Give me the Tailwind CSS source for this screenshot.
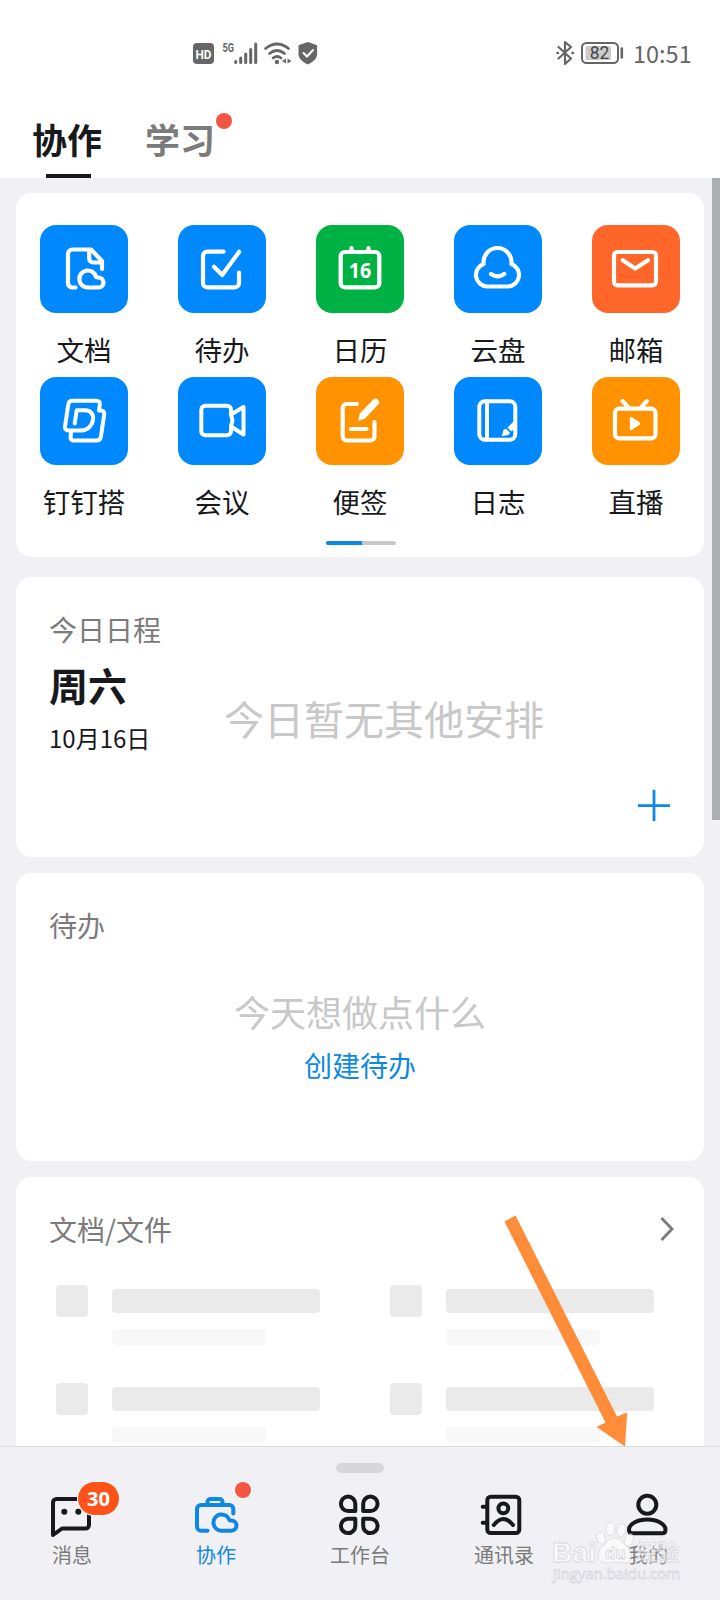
<!DOCTYPE html>
<html lang="zh-CN">
<head>
<meta charset="utf-8">
<title>协作</title>
<script src="https://cdn.jsdelivr.net/npm/@tailwindcss/browser@4"></script>
</head>
<body class="bg-[#f1f0f5]">
<div class="relative flex h-[1600px] w-[720px] flex-col overflow-hidden bg-[#f1f0f5] font-['Noto_Sans_CJK_SC',sans-serif] text-[#17191c]">

  <!-- Header -->
  <header class="flex h-[178px] shrink-0 flex-col bg-white">
    <div class="flex h-[106px] items-center justify-between pl-[190px] pr-7">
      <svg class="h-8 w-[132px]" viewBox="190 37 132 32" fill="none" stroke="#666" stroke-linecap="round">
        <rect x="193" y="43" width="21" height="21" rx="4" fill="#666" stroke="none"/>
        <text x="203.500" y="58.500" text-anchor="middle" font-family="Roboto" font-weight="700" font-size="13" textLength="16" lengthAdjust="spacingAndGlyphs" fill="#fff" stroke="none">HD</text>
        <text x="222.500" y="52" font-family="Roboto" font-weight="700" font-size="13" textLength="11.500" lengthAdjust="spacingAndGlyphs" fill="#666" stroke="none">5G</text>
        <path d="M235.700 61.500v1M240.700 58v4.500M245.700 54v8.500M250.700 49.500v13M255.700 44v18.500" stroke-width="3"/>
        <path d="M265.500 48.500q11.500-9 23 0M269.500 53.500q7.500-6 15 0M273 58q4-3 8 0" stroke-width="2.700"/>
        <circle cx="277" cy="62" r="2.200" fill="#666" stroke="none"/>
        <path d="M286 58.500v5l-4-2.500zM287.500 58.500v5l4-2.500z" fill="#666" stroke="none"/>
        <path d="M307.800 42l9.300 3.300v8.700c0 4.500-4 8-9.300 10.500-5.300-2.500-9.300-6-9.300-10.500v-8.700z" fill="#666" stroke="none"/>
        <path d="M303.500 53l3.500 3.500 6-6.500" stroke="#fff" stroke-width="2"/>
      </svg>
      <div class="flex items-center">
        <svg class="h-8 w-[73px]" viewBox="554 37 73 32" fill="none" stroke="#666" stroke-linecap="round" stroke-linejoin="round">
          <path d="M558.500 47l12.500 11.500-6 5.500V42l6 5-12.500 11.500" stroke-width="2.200"/>
          <path d="M557.500 53h.5M572.500 53h.5" stroke-width="2.500"/>
          <rect x="582" y="43" width="36" height="20" rx="4.500" stroke-width="2"/>
          <rect x="585.500" y="46" width="25.500" height="14" rx="1.500" fill="#ccc" stroke="none"/>
          <path d="M621.800 48.500v9" stroke-width="2.600"/>
          <text x="599.500" y="59" text-anchor="middle" font-family="Roboto" font-size="17.500" fill="#444" stroke="none">82</text>
        </svg>
        <span class="w-[65px] whitespace-nowrap pl-[6px] text-[23.500px] leading-8 text-[#666]">10:51</span>
      </div>
    </div>
    <nav class="flex h-[72px] pl-8">
      <div class="flex h-full w-[70px] flex-col items-center justify-between">
        <span class="text-[35px] font-bold leading-[66px]">协作</span>
        <span class="ml-[2px] h-1 w-[45px] shrink-0 bg-[#17191c]"></span>
      </div>
      <div class="relative ml-[43px] w-[72px]">
        <span class="text-[35px] font-bold leading-[66px] text-[#7b7b7b]">学习</span>
        <span class="absolute left-[71px] top-[7px] h-4 w-4 rounded-full bg-[#f25643]"></span>
      </div>
    </nav>
  </header>

  <main class="flex h-[1268px] shrink-0 flex-col overflow-hidden px-4 pt-[15px]">
    <!-- App grid -->
    <section class="flex h-[364px] w-[688px] shrink-0 flex-col items-center rounded-2xl bg-white pt-8">
      <div class="grid w-[690px] grid-cols-[repeat(5,138px)] justify-center text-center text-[27.500px] leading-[40px]">
        <div class="flex h-[152px] flex-col items-center">
          <svg class="h-[88px] w-[88px] shrink-0 rounded-[16px] bg-[#0089ff]" viewBox="0 0 88 88" fill="none" stroke="#fff" stroke-width="4.200" stroke-linecap="round" stroke-linejoin="round"><path d="M35.500 62.500h-3a4.500 4.500 0 0 1-4.500-4.500v-29a4.500 4.500 0 0 1 4.500-4.500H51L62 36v8M49.200 25v8.500a4 4 0 0 0 4 4H61"/><path d="M48 62.500a8.500 8.500 0 1 1 8-10.600l2.200.6a5 5 0 1 1 .6 10z"/></svg>
          <span class="mt-4">文档</span>
        </div>
        <div class="flex h-[152px] flex-col items-center">
          <svg class="h-[88px] w-[88px] shrink-0 rounded-[16px] bg-[#0089ff]" viewBox="0 0 88 88" fill="none" stroke="#fff" stroke-width="4.200" stroke-linecap="round" stroke-linejoin="round"><path d="M45.500 26.700H29a4 4 0 0 0-4 4v27.600a4 4 0 0 0 4 4h28a4 4 0 0 0 4-4V47.500M36 41.700l8.200 8.300 17-23.300"/></svg>
          <span class="mt-4">待办</span>
        </div>
        <div class="flex h-[152px] flex-col items-center">
          <svg class="h-[88px] w-[88px] shrink-0 rounded-[16px] bg-[#00b243]" viewBox="0 0 88 88" fill="none" stroke="#fff" stroke-width="4.200" stroke-linecap="round" stroke-linejoin="round"><rect x="24.700" y="27" width="38.600" height="35.300" rx="4"/><path d="M35.500 23v4M52.500 23v4"/><text x="44" y="52.800" text-anchor="middle" font-family="Open Sans" font-weight="700" font-size="22" textLength="22.500" lengthAdjust="spacingAndGlyphs" fill="#fff" stroke="none">16</text></svg>
          <span class="mt-4">日历</span>
        </div>
        <div class="flex h-[152px] flex-col items-center">
          <svg class="h-[88px] w-[88px] shrink-0 rounded-[16px] bg-[#0089ff]" viewBox="0 0 88 88" fill="none" stroke="#fff" stroke-width="4.200" stroke-linecap="round" stroke-linejoin="round"><path d="M29.600 39a14 14.300 0 1 1 27.800 0A11.600 11.600 0 0 1 53.800 61.500H33.200A11.600 11.600 0 0 1 29.600 39zM37 49q6.600 4.600 13.200 0"/></svg>
          <span class="mt-4">云盘</span>
        </div>
        <div class="flex h-[152px] flex-col items-center">
          <svg class="h-[88px] w-[88px] shrink-0 rounded-[16px] bg-[#ff6629]" viewBox="0 0 88 88" fill="none" stroke="#fff" stroke-width="4.200" stroke-linecap="round" stroke-linejoin="round"><rect x="22" y="27" width="42" height="33.300" rx="3.500"/><path d="M30.700 35.200L43.200 43.500l12.800-8.300"/></svg>
          <span class="mt-4">邮箱</span>
        </div>
        <div class="flex h-[152px] flex-col items-center">
          <svg class="h-[88px] w-[88px] shrink-0 rounded-[16px] bg-[#0089ff]" viewBox="0 0 88 88" fill="none" stroke="#fff" stroke-width="4" stroke-linecap="round" stroke-linejoin="round"><path d="M34.700 46.500l2-13.200H45c6 0 8.800 4 8 9.500-1 6.500-6 10.700-13 10.700H28.500c-2.500 0-3.800-1.600-3.500-4l3.300-22c.3-2.400 1.800-3.800 4-3.800h24c2.600 0 3.800 1.400 3.500 3.800l-.8 6h1.500c3 0 4 1.400 3.700 3.800l-3.300 22.500c-.4 2.600-2 3.800-4.200 3.800H34c-2.600 0-3.700-1.600-3.400-4l.4-3"/></svg>
          <span class="mt-4">钉钉搭</span>
        </div>
        <div class="flex h-[152px] flex-col items-center">
          <svg class="h-[88px] w-[88px] shrink-0 rounded-[16px] bg-[#0089ff]" viewBox="0 0 88 88" fill="none" stroke="#fff" stroke-width="4" stroke-linecap="round" stroke-linejoin="round"><path d="M53 37.500v-4.800a4 4 0 0 0-4-4H27.300a4 4 0 0 0-4 4v21.600a4 4 0 0 0 4 4H49a4 4 0 0 0 4-4v-4.800"/><path d="M53 37.500L65.500 30v27.500L53 49.500M53 37.500l1.500 6-1.500 6"/></svg>
          <span class="mt-4">会议</span>
        </div>
        <div class="flex h-[152px] flex-col items-center">
          <svg class="h-[88px] w-[88px] shrink-0 rounded-[16px] bg-[#ff9200]" viewBox="0 0 88 88" fill="none" stroke="#fff" stroke-width="4.200" stroke-linecap="round" stroke-linejoin="round"><path d="M41 27H30.700a4 4 0 0 0-4 4v28.500a4 4 0 0 0 4 4H54.500a4 4 0 0 0 4-4V45M35 52h15.500"/><path d="M41.800 44l2-7.500L57 22.800a3.500 3.500 0 0 1 5 5L49 41.500z" fill="#fff" stroke="none"/></svg>
          <span class="mt-4">便签</span>
        </div>
        <div class="flex h-[152px] flex-col items-center">
          <svg class="h-[88px] w-[88px] shrink-0 rounded-[16px] bg-[#0089ff]" viewBox="0 0 88 88" fill="none" stroke="#fff" stroke-width="4" stroke-linecap="round" stroke-linejoin="round"><rect x="25.300" y="24.300" width="36" height="38.500" rx="5.500"/><path d="M33 24.500v38"/><path d="M47.700 59.200l2-6.700 2.500-.8 3.800 4-1.500 2.300zM53.500 50.500l7.500-7.500v8.500l-3.700 3z" fill="#fff" stroke="none"/></svg>
          <span class="mt-4">日志</span>
        </div>
        <div class="flex h-[152px] flex-col items-center">
          <svg class="h-[88px] w-[88px] shrink-0 rounded-[16px] bg-[#ff9200]" viewBox="0 0 88 88" fill="none" stroke="#fff" stroke-width="4.200" stroke-linecap="round" stroke-linejoin="round"><rect x="23" y="31.700" width="40.500" height="29.600" rx="4"/><path d="M30.500 24l6 6.500M55 24l-6 6.500"/><path d="M39.300 41.500v10l7.500-5z" fill="#fff" stroke-width="3"/></svg>
          <span class="mt-4">直播</span>
        </div>
      </div>
      <div class="ml-[2px] mt-[12px] flex h-1 w-[70px] overflow-hidden rounded-full bg-[#c8c8c8]"><span class="w-9 bg-[#0f88e4]"></span></div>
    </section>

    <!-- Today's schedule -->
    <section class="mt-5 flex h-[280px] shrink-0 rounded-2xl bg-white pl-8 pr-[34px]">
      <div class="flex w-[176px] flex-col pl-[1px] pt-8">
        <span class="text-[28px] leading-[40px] text-[#7b7b7b]">今日日程</span>
        <span class="mt-[6px] text-[39px] font-bold leading-[58px]">周六</span>
        <span class="mt-[7px] text-[24px] leading-[36px]">10月16日</span>
      </div>
      <span class="pt-[111px] text-[40px] leading-[60px] text-[#c8c8c8]">今日暂无其他安排</span>
      <svg class="ml-auto mt-[212px] h-8 w-8" viewBox="0 0 32 32" stroke="#0f88e4" stroke-width="2.800"><path d="M0 16.700h32M16 .700v32"/></svg>
    </section>

    <!-- To-do -->
    <section class="mt-4 flex h-[288px] shrink-0 flex-col rounded-2xl bg-white px-8 pt-[32px]">
      <span class="pl-[1px] text-[28px] leading-[40px] text-[#7b7b7b]">待办</span>
      <span class="mt-[40px] text-center text-[36px] leading-[52px] text-[#c8c8c8]">今天想做点什么</span>
      <span class="mt-[8px] text-center text-[28px] leading-[40px] text-[#0f88e4]">创建待办</span>
    </section>

    <!-- Docs and files -->
    <section class="mt-4 flex h-[330px] shrink-0 flex-col rounded-t-2xl bg-white pl-8 pr-[29px] pt-8">
      <div class="flex items-center justify-between">
        <span class="pl-[1px] text-[28px] leading-[40px] text-[#7b7b7b]">文档/文件</span>
        <svg class="h-6 w-4" viewBox="0 0 16 24" fill="none" stroke="#7b7b7b" stroke-width="2.800"><path d="M2.500 1l10.500 11L2.500 23"/></svg>
      </div>
      <div class="mt-[36px] grid grid-cols-[334px_264px] gap-y-[38px] pl-2">
        <div class="flex h-[60px] gap-6"><span class="h-8 w-8 rounded bg-[#eaeaea]"></span><div class="mt-1 flex flex-col gap-4"><span class="h-6 w-[208px] rounded bg-[#eaeaea]"></span><span class="h-4 w-[154px] rounded-sm bg-[#f8f8f8]"></span></div></div>
        <div class="flex h-[60px] gap-6"><span class="h-8 w-8 rounded bg-[#eaeaea]"></span><div class="mt-1 flex flex-col gap-4"><span class="h-6 w-[208px] rounded bg-[#eaeaea]"></span><span class="h-4 w-[154px] rounded-sm bg-[#f8f8f8]"></span></div></div>
        <div class="flex h-[60px] gap-6"><span class="h-8 w-8 rounded bg-[#eaeaea]"></span><div class="mt-1 flex flex-col gap-4"><span class="h-6 w-[208px] rounded bg-[#eaeaea]"></span><span class="h-4 w-[154px] rounded-sm bg-[#f8f8f8]"></span></div></div>
        <div class="flex h-[60px] gap-6"><span class="h-8 w-8 rounded bg-[#eaeaea]"></span><div class="mt-1 flex flex-col gap-4"><span class="h-6 w-[208px] rounded bg-[#eaeaea]"></span><span class="h-4 w-[154px] rounded-sm bg-[#f8f8f8]"></span></div></div>
      </div>
    </section>
  </main>

  <!-- Bottom tabs -->
  <footer class="flex h-[154px] shrink-0 flex-col items-center border-t border-[#dcdce0] bg-[#f1f0f5]">
    <span class="mt-[16px] h-[10px] w-12 rounded-full bg-[#d7d7db]"></span>
    <div class="mt-[20px] grid w-full grid-cols-5 text-[20px] leading-[28px] text-[#7b7b7b]">
      <div class="relative flex flex-col items-center">
        <svg class="h-12 w-12" viewBox="0 0 48 48" fill="none" stroke="#17191c" stroke-width="4" stroke-linejoin="round"><path d="M5 42V9.500A3.500 3.500 0 0 1 8.500 6h29A3.500 3.500 0 0 1 41 9.500v22.500a3.500 3.500 0 0 1-3.500 3.500H14z"/><circle cx="16.300" cy="18.700" r="3" fill="#17191c" stroke="none"/><circle cx="30.300" cy="18.700" r="3" fill="#17191c" stroke="none"/></svg>
        <span class="absolute -top-[11px] left-[78px] flex h-[33px] w-[41px] items-center justify-center rounded-full bg-[#ff5219] font-['Open_Sans'] text-[20px] font-bold text-white ring-1 ring-white">30</span>
        <span>消息</span>
      </div>
      <div class="relative flex flex-col items-center text-[#0f88e4]">
        <svg class="-ml-[1px] h-12 w-12" viewBox="0 0 48 48" fill="none" stroke="currentColor" stroke-width="4" stroke-linecap="round" stroke-linejoin="round"><path d="M15.500 37.700H9a4 4 0 0 1-4-4V16a4 4 0 0 1 4-4h28.300a4 4 0 0 1 4 4v4.500M15.500 12V9a3 3 0 0 1 3-3h9a3 3 0 0 1 3 3v3"/><path d="M29.500 37.800a8.200 8.200 0 1 1 8-10.500l1.800.3a5.100 5.100 0 1 1 .2 10.200z"/></svg>
        <span class="absolute -top-[11px] left-[91px] h-4 w-4 rounded-full bg-[#f25643] ring-1 ring-white/60"></span>
        <span>协作</span>
      </div>
      <div class="flex flex-col items-center">
        <svg class="h-12 w-12" viewBox="0 0 48 48" fill="none" stroke="#17191c" stroke-width="4" stroke-linejoin="round"><path d="M19.300 18h-7.300a7.200 7.200 0 1 1 7.300-7.200zM27.200 18h7.300a7.200 7.200 0 1 0-7.300-7.200zM19.300 25.700h-7.300a7.200 7.200 0 1 0 7.300 7.200zM27.200 25.700h7.300a7.200 7.200 0 1 1-7.300 7.200z"/></svg>
        <span>工作台</span>
      </div>
      <div class="flex flex-col items-center">
        <svg class="h-12 w-12" viewBox="0 0 48 48" fill="none" stroke="#17191c" stroke-width="4" stroke-linecap="round" stroke-linejoin="round"><rect x="7.300" y="3.700" width="32" height="36.300" rx="3.500"/><path d="M2.700 13.700h4M2.700 29.700h4M13.800 32q9.600-12 19.200 0"/><circle cx="23.300" cy="15.300" r="4.900"/></svg>
        <span>通讯录</span>
      </div>
      <div class="flex flex-col items-center">
        <svg class="h-12 w-12" viewBox="0 0 48 48" fill="none" stroke="#17191c" stroke-width="4" stroke-linejoin="round"><circle cx="23.300" cy="11.700" r="9"/><path d="M23.300 26.500c10 0 18.200 4.500 18.200 10.200 0 2.400-1.200 3.500-3.200 3.500H8.200c-2 0-3.200-1.100-3.200-3.500 0-5.700 8.300-10.200 18.300-10.200z"/></svg>
        <span>我的</span>
      </div>
    </div>
  </footer>

  <!-- Scroll indicator -->
  <span class="absolute right-0 top-[178px] h-[642px] w-2 bg-[#acaeb1]"></span>

  <!-- Pointer arrow -->
  <svg class="absolute left-[497px] top-[1210px] h-[240px] w-[140px]" viewBox="497 1210 140 240"><path d="M504.500 1221.500l11-6L617 1416.500l10.200-4L625 1446.500l-28.500-19.500 9-4.500z" fill="#ff8c38"/></svg>

  <!-- Watermark -->
  <svg class="absolute left-[548px] top-[1518px] h-[70px] w-[140px]" viewBox="548 1518 140 70" fill="#fff" fill-opacity=".6" stroke="#c4c4ca" stroke-opacity=".6" stroke-width=".8">
    <text x="552" y="1562" font-family="Liberation Sans" font-weight="700" font-size="28" textLength="44" lengthAdjust="spacingAndGlyphs">Bai</text>
    <ellipse cx="601" cy="1538" rx="4.300" ry="6.500" transform="rotate(-20 601 1538)"/>
    <ellipse cx="610.500" cy="1529" rx="4.500" ry="6.500"/>
    <ellipse cx="621.500" cy="1530" rx="4.500" ry="6.500" transform="rotate(12 621.500 1530)"/>
    <ellipse cx="629" cy="1540" rx="4.300" ry="6.500" transform="rotate(25 629 1540)"/>
    <path d="M615 1538c6 0 8 5 12 9 6 5 6 16-3 16-4 0-5-1-9-1s-5 1-9 1c-9 0-10-10-4-16 4-4 7-9 13-9z"/>
    <text x="605" y="1559" font-family="Liberation Sans" font-weight="700" font-size="17" stroke="#bdbdc4">du</text>
    <text x="635" y="1560" font-family="Noto Sans CJK SC" font-weight="700" font-size="22">经验</text>
    <text x="553" y="1579" font-family="Open Sans" font-size="15" textLength="127" lengthAdjust="spacingAndGlyphs">jingyan.baidu.com</text>
  </svg>
</div>
</body>
</html>
